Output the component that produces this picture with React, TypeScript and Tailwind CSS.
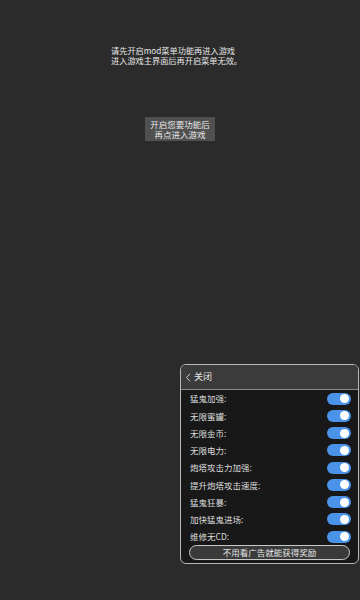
import React from "react";

const items = [
  "猛鬼加强:",
  "无限蜜罐:",
  "无限金币:",
  "无限电力:",
  "炮塔攻击力加强:",
  "提升炮塔攻击速度:",
  "猛鬼狂暴:",
  "加快猛鬼进场:",
  "维修无CD:",
];

function Toggle() {
  return (
    <div className="w-[24px] h-[12px] rounded-full bg-[#4a93e8] flex items-center justify-end pr-[2px]">
      <div className="w-[9px] h-[9px] rounded-full bg-white" />
    </div>
  );
}

export default function App() {
  return (
    <div
      className="relative w-[360px] h-[600px] bg-[#2b2b2b] overflow-hidden"
      style={{ fontFamily: '"Noto Sans CJK SC", "Noto Sans", sans-serif' }}
    >
      <div className="pt-[45px] pl-[111px] text-[8.2px] leading-[10px] text-[#e6e6e6]">
        <div>请先开启mod菜单功能再进入游戏</div>
        <div>进入游戏主界面后再开启菜单无效。</div>
      </div>
      <div className="flex justify-center mt-[52px]">
        <div className="w-[70px] h-[24px] bg-[#505050] flex flex-col items-center justify-center text-[8.5px] leading-[10px] text-[#e8e8e8]">
          <div>开启您要功能后</div>
          <div>再点进入游戏</div>
        </div>
      </div>

      <div className="absolute left-[180px] top-[364px] w-[179px] h-[200px] rounded-[6px] border border-[#b8b8b8] bg-[#181818] overflow-hidden flex flex-col">
        <div className="h-[25px] bg-[#3b3b3b] border-b border-[#8a8a8a] flex items-center pl-[4px] text-[9px] text-[#e6e6e6]">
          <svg width="6" height="9" viewBox="0 0 6 9" className="mr-[3px]">
            <path d="M5 0.8 L1.5 4.5 L5 8.2" stroke="#d0d0d0" strokeWidth="1" fill="none" />
          </svg>
          <span>关闭</span>
        </div>
        <div className="flex flex-col">
          {items.map((t) => (
            <div key={t} className="h-[17.25px] flex items-center justify-between pl-[9px] pr-[7px]">
              <span className="text-[8.5px] text-[#dcdcdc]">{t}</span>
              <Toggle />
            </div>
          ))}
        </div>
        <div className="px-[8px]">
          <div className="h-[15px] rounded-full border border-[#c8c8c8] bg-[#3a3a3a] flex items-center justify-center text-[8.5px] text-[#e6e6e6]">
            不用看广告就能获得奖励
          </div>
        </div>
      </div>
    </div>
  );
}
